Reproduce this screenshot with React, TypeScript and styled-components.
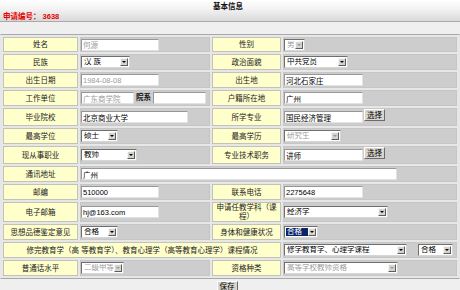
import React from "react";
import styled, { createGlobalStyle } from "styled-components";

const FONT = `"Liberation Sans", "Noto Sans CJK SC", sans-serif`;

const GlobalStyle = createGlobalStyle`
  * { box-sizing: border-box; }
  html, body { margin: 0; padding: 0; background: #efefef; }
  body {
    width: 460px;
    height: 290px;
    overflow: hidden;
    font-family: ${FONT};
    font-size: 7.5px;
    color: #000;
  }
`;

const Page = styled.div`
  width: 460px;
  display: flex;
  flex-direction: column;
`;

const Header = styled.header`
  height: 22px;
  padding: 2px 3px 0;
  background: linear-gradient(#ffffff 0%, #f4f4f4 40%, #d9d9d9 100%);
  border-bottom: 1px solid #a9a9a9;
  display: flex;
  flex-direction: column;
`;

const Title = styled.h1`
  margin: 0;
  font-size: 7.5px;
  line-height: 9px;
  font-weight: bold;
  text-align: center;
  color: #111;
  padding-right: 4px;
`;

const AppNo = styled.div`
  margin-top: 1px;
  line-height: 9px;
  font-weight: bold;
  color: #e60000;
`;

const FormTable = styled.table`
  margin-top: 12px;
  width: 460px;
  table-layout: fixed;
  border-collapse: separate;
  border-spacing: 2px;
  background: #e7e7e7;
  border-top: 1px solid #a9a9a9;
  border-bottom: 1px solid #a9a9a9;
  border-left: 1px solid #e7e7e7;
  border-right: 1px solid #e7e7e7;
`;

const Row = styled.tr<{ $h?: number }>`
  height: ${(p) => p.$h ?? 16}px;
`;

const Label = styled.th`
  padding: 0;
  background: #ffffcc;
  border: 1px solid #c2c2b8;
  font-weight: normal;
  text-align: center;
  vertical-align: middle;
  line-height: 9px;
  color: #1a1a1a;
`;

const Value = styled.td`
  padding: 0;
  background: #cdcdcd;
  border: 1px solid #c6c6c6;
  vertical-align: middle;
`;

const Field = styled.div<{ $gap?: number }>`
  display: flex;
  align-items: center;
  gap: ${(p) => p.$gap ?? 0}px;
`;

const TextInput = styled.input<{ $w: number }>`
  width: ${(p) => p.$w}px;
  height: 12px;
  margin: 0;
  padding: 0 1px;
  border: 1px solid;
  border-color: #979797 #e2e2e2 #e2e2e2 #979797;
  background: #fff;
  font: 7.5px ${FONT};
  color: #000;
  outline: none;
  &:disabled {
    color: #9b9b9b;
    background: #fff;
  }
`;

const Inline = styled.span`
  padding: 0 2px;
  color: #111;
  font-weight: bold;
  line-height: 10px;
`;

const SelectBox = styled.div<{ $w: number; $disabled?: boolean }>`
  width: ${(p) => p.$w}px;
  height: 12px;
  display: flex;
  align-items: stretch;
  padding: 1px;
  border: 1px solid;
  border-color: #6f6f6f #d6d6d6 #d6d6d6 #6f6f6f;
  background: #fff;
  color: ${(p) => (p.$disabled ? "#9b9b9b" : "#000")};
`;

const SelectText = styled.span<{ $hl?: boolean }>`
  flex: 1;
  min-width: 0;
  padding-left: 1px;
  line-height: 8px;
  white-space: nowrap;
  overflow: hidden;
  background: ${(p) => (p.$hl ? "#0a246a" : "transparent")};
  color: ${(p) => (p.$hl ? "#fff" : "inherit")};
`;

const Arrow = styled.span<{ $disabled?: boolean }>`
  width: 8px;
  flex: 0 0 8px;
  display: flex;
  align-items: center;
  justify-content: center;
  background: #d6d3cc;
  border: 1px solid;
  border-color: #f6f6f6 #5d5d5d #5d5d5d #f6f6f6;
  &::after {
    content: "";
    border-left: 2px solid transparent;
    border-right: 2px solid transparent;
    border-top: 2px solid ${(p) => (p.$disabled ? "#9a9a9a" : "#000")};
  }
`;

const PickButton = styled.button`
  width: 21px;
  height: 12px;
  margin: 0 0 4px 1px;
  padding: 0;
  font: 7.5px ${FONT};
  line-height: 9px;
  color: #000;
  background: #d8d5ce;
  border: 1px solid;
  border-color: #ffffff #6b6b6b #6b6b6b #ffffff;
`;

const Footer = styled.footer`
  height: 13px;
  padding: 2px 6px 0 0;
  display: flex;
  justify-content: center;
  align-items: flex-start;
  overflow: hidden;
  border-bottom: 1px solid #a9c6e6;
`;

const SaveButton = styled.button`
  width: 21px;
  height: 10px;
  margin: 0;
  padding: 0;
  font: 7.5px ${FONT};
  line-height: 8px;
  color: #000;
  background: #d8d5ce;
  border: 1px solid;
  border-color: #ffffff #6b6b6b #6b6b6b #ffffff;
  border-bottom: none;
`;

function Select({
  w,
  text,
  disabled,
  hl,
}: {
  w: number;
  text: string;
  disabled?: boolean;
  hl?: boolean;
}) {
  return (
    <SelectBox $w={w} $disabled={disabled}>
      <SelectText $hl={hl}>{text}</SelectText>
      <Arrow $disabled={disabled} />
    </SelectBox>
  );
}

function Input({ w, value, disabled }: { w: number; value: string; disabled?: boolean }) {
  return <TextInput $w={w} defaultValue={value} disabled={disabled} readOnly />;
}

export default function App() {
  return (
    <Page>
      <GlobalStyle />
      <Header>
        <Title>基本信息</Title>
        <AppNo>申请编号： 3638</AppNo>
      </Header>
      <FormTable>
        <colgroup>
          <col style={{ width: 75 }} />
          <col style={{ width: 130 }} />
          <col style={{ width: 69 }} />
          <col style={{ width: 174 }} />
        </colgroup>
        <tbody>
          <Row $h={15}>
            <Label>姓名</Label>
            <Value>
              <Field>
                <Input w={78} value="何源" disabled />
              </Field>
            </Value>
            <Label>性别</Label>
            <Value>
              <Field>
                <Select w={21} text="男" disabled />
              </Field>
            </Value>
          </Row>
          <Row>
            <Label>民族</Label>
            <Value>
              <Field>
                <Select w={49} text="汉 族" />
              </Field>
            </Value>
            <Label>政治面貌</Label>
            <Value>
              <Field>
                <Select w={64} text="中共党员" />
              </Field>
            </Value>
          </Row>
          <Row>
            <Label>出生日期</Label>
            <Value>
              <Field>
                <Input w={78} value="1984-08-08" disabled />
              </Field>
            </Value>
            <Label>出生地</Label>
            <Value>
              <Field>
                <Input w={79} value="河北石家庄" />
              </Field>
            </Value>
          </Row>
          <Row>
            <Label>工作单位</Label>
            <Value>
              <Field>
                <Input w={53} value="广东商学院" disabled />
                <Inline>院系</Inline>
                <Input w={53} value="" />
              </Field>
            </Value>
            <Label>户籍所在地</Label>
            <Value>
              <Field>
                <Input w={79} value="广州" />
              </Field>
            </Value>
          </Row>
          <Row $h={17}>
            <Label>毕业院校</Label>
            <Value>
              <Field>
                <Input w={107} value="北京商业大学" />
              </Field>
            </Value>
            <Label>所学专业</Label>
            <Value>
              <Field>
                <Input w={79} value="国民经济管理" />
                <PickButton>选择</PickButton>
              </Field>
            </Value>
          </Row>
          <Row>
            <Label>最高学位</Label>
            <Value>
              <Field>
                <Select w={37} text="硕士" />
              </Field>
            </Value>
            <Label>最高学历</Label>
            <Value>
              <Field>
                <Select w={57} text="研究生" disabled />
              </Field>
            </Value>
          </Row>
          <Row $h={17}>
            <Label>现从事职业</Label>
            <Value>
              <Field>
                <Select w={56} text="教师" />
              </Field>
            </Value>
            <Label>专业技术职务</Label>
            <Value>
              <Field>
                <Input w={79} value="讲师" />
                <PickButton>选择</PickButton>
              </Field>
            </Value>
          </Row>
          <Row>
            <Label>通讯地址</Label>
            <Value colSpan={3}>
              <Field>
                <Input w={316} value="广州" />
              </Field>
            </Value>
          </Row>
          <Row>
            <Label>邮编</Label>
            <Value>
              <Field>
                <Input w={78} value="510000" />
              </Field>
            </Value>
            <Label>联系电话</Label>
            <Value>
              <Field>
                <Input w={79} value="2275648" />
              </Field>
            </Value>
          </Row>
          <Row $h={20}>
            <Label>电子邮箱</Label>
            <Value>
              <Field>
                <Input w={78} value="hj@163.com" />
              </Field>
            </Value>
            <Label>申请任教学科（课程）</Label>
            <Value>
              <Field>
                <Select w={104} text="经济学" />
              </Field>
            </Value>
          </Row>
          <Row>
            <Label>思想品德鉴定意见</Label>
            <Value>
              <Field>
                <Select w={37} text="合格" />
              </Field>
            </Value>
            <Label>身体和健康状况</Label>
            <Value>
              <Field>
                <Select w={34} text="合格" hl />
              </Field>
            </Value>
          </Row>
          <Row>
            <Label colSpan={3}>修完教育学（高 等教育学）、教育心理学（高等教育心理学）课程情况</Label>
            <Value>
              <Field $gap={11}>
                <Select w={123} text="修学教育学、心理学课程" />
                <Select w={35} text="合格" />
              </Field>
            </Value>
          </Row>
          <Row>
            <Label>普通话水平</Label>
            <Value>
              <Field>
                <Select w={43} text="二级甲等" disabled />
              </Field>
            </Value>
            <Label>资格种类</Label>
            <Value>
              <Field>
                <Select w={114} text="高等学校教师资格" disabled />
              </Field>
            </Value>
          </Row>
        </tbody>
      </FormTable>
      <Footer>
        <SaveButton>保存</SaveButton>
      </Footer>
    </Page>
  );
}
